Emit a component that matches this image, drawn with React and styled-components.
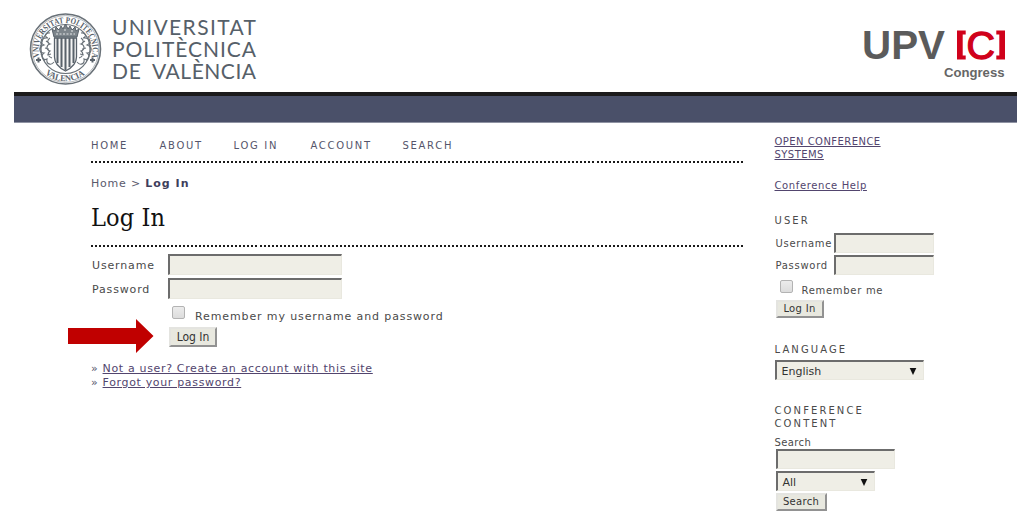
import React from 'react';
import styled, { createGlobalStyle } from 'styled-components';

const Global = createGlobalStyle`
  * { box-sizing: border-box; }
  body {
    margin: 0;
    background: #fff;
    color: #4a4a4a;
    font: 11px/14px "DejaVu Sans", Verdana, sans-serif;
    overflow: hidden;
  }
`;

const Page = styled.div`
  width: 1024px;
  height: 517px;
  overflow: hidden;
`;
const Header = styled.header`
  display: flex;
  justify-content: space-between;
  height: 92px;
  padding: 8px 14px 0 26px;
`;
const Bar = styled.div`
  height: 31px;
  margin: 0 7px 0 14px;
  background: #4a5069;
  border-top: 4px solid #1b1a1b;
  border-bottom: 1px solid #8f93a3;
`;
const Columns = styled.div`
  display: flex;
`;
const Main = styled.main`
  width: 743px;
  padding-top: 14px;
`;
const Dots = styled.div`
  height: 2px;
  margin-left: 91px;
  background: repeating-linear-gradient(90deg, #1a1a1a 0 2px, #fff 2px 4.012px);
`;
const Nav = styled.nav`
  display: flex;
  height: 24px;
  padding-left: 91px;
  font-size: 10px;
  line-height: 17px;
  letter-spacing: 1.7px;
  color: #55556b;
`;
const NavItem = styled.a`
  width: ${(p) => p.$w}px;
  white-space: nowrap;
`;
const Crumbs = styled.div`
  padding: 13px 0 0 91px;
  letter-spacing: 0.8px;
  line-height: 16px;
  color: #5a5a6c;
  b { color: #3e3e5c; letter-spacing: 1px; }
`;
const Title = styled.h1`
  height: 53px;
  margin: 0;
  padding: 9px 0 0 91px;
  font: 400 25px/34px "DejaVu Serif Condensed", "DejaVu Serif", serif;
  letter-spacing: 0.1px;
  color: #111;
`;
const FormRow = styled.div`
  display: flex;
  align-items: center;
  height: 24px;
`;
const Label = styled.label`
  width: ${(p) => p.$w}px;
  padding-top: ${(p) => (p.$small ? 1 : 3)}px;
  letter-spacing: ${(p) => (p.$small ? 0.7 : 0.85)}px;
  font-size: ${(p) => (p.$small ? 10 : 11)}px;
  white-space: nowrap;
`;
const Field = styled.input`
  width: ${(p) => p.$w}px;
  height: ${(p) => p.$h || 21}px;
  padding: 0 4px;
  background: #efeee6;
  border: 2px solid;
  border-color: #6c6c6c #e9e8df #e9e8df #6c6c6c;
  border-right-width: 1px;
  border-bottom-width: 1px;
  border-radius: 0;
  outline: none;
`;
const Check = styled.input`
  appearance: none;
  width: 13px;
  height: 13px;
  margin: 0;
  border: 1px solid #b3b3b3;
  border-radius: 2px;
  background: linear-gradient(#ececec, #dcdcdc);
`;
const Button = styled.button`
  width: ${(p) => p.$w}px;
  height: ${(p) => p.$h}px;
  padding: 0;
  background: #e8e8df;
  border: 2px solid;
  border-color: #e4e4e0 #929292 #929292 #e4e4e0;
  color: #333;
  font: ${(p) => (p.$small ? '10px "DejaVu Sans"' : '12px "DejaVu Sans Condensed", "DejaVu Sans"')}, sans-serif;
  letter-spacing: ${(p) => (p.$small ? 0.3 : 0)}px;
  line-height: 14px;
`;
const MainForm = styled.form`
  padding: 5px 0 0 92px;
`;
const RememberRow = styled.div`
  display: flex;
  height: 27px;
  padding: 6px 0 0 80px;
`;
const RememberText = styled.span`
  padding: 4px 0 0 10px;
  letter-spacing: 0.88px;
`;
const SubmitRow = styled.div`
  display: flex;
  gap: 15px;
  margin-left: -24px;
  height: 27px;
`;
const Arrow = styled.svg`
  margin-top: -8px;
  flex: none;
`;
const Links = styled.div`
  padding: 8px 0 0 91px;
  color: #55556b;
  letter-spacing: 0.66px;
`;
const LinkRow = styled.div`
  height: 14px;
  white-space: nowrap;
`;
const Link = styled.a`
  color: #52456e;
  text-decoration: underline;
`;
const Aside = styled.aside`
  padding: 12px 0 0 31.5px;
  font-size: 10px;
  line-height: 13px;
`;
const SideLink = styled(Link)`
  display: block;
  width: 125px;
  letter-spacing: ${(p) => p.$ls}px;
  margin-bottom: ${(p) => p.$mb}px;
`;
const SideTitle = styled.div`
  width: 110px;
  letter-spacing: 2.1px;
  margin-bottom: ${(p) => p.$mb}px;
`;
const SideForm = styled.form`
  padding-left: 1px;
  margin-bottom: 25px;
`;
const SideRow = styled.div`
  display: flex;
  align-items: center;
  height: 22px;
`;
const SideRemember = styled.div`
  display: flex;
  height: 24px;
  padding: 4px 0 0 4px;
  letter-spacing: 0.7px;
  span { padding: 4px 0 0 9px; }
`;
const Select = styled.div`
  display: flex;
  align-items: center;
  justify-content: space-between;
  width: ${(p) => p.$w}px;
  height: 20px;
  padding: 1px 6px 0 5px;
  background: #efeee6;
  border: 2px solid;
  border-color: #6c6c6c #e9e8df #e9e8df #6c6c6c;
  border-right-width: 1px;
  border-bottom-width: 1px;
  color: #333;
  font-size: 11px;
  margin-bottom: ${(p) => p.$mb}px;
`;
const SearchBox = styled.form`
  padding-left: 1px;
`;
const SearchLabel = styled.label`
  display: block;
  margin: 0 0 0 -1px;
  height: 13px;
  letter-spacing: 0.4px;
`;
const SearchField = styled(Field)`
  display: block;
  margin-bottom: 2px;
`;

function Caret() {
  return (
    <svg width="8" height="7" viewBox="0 0 8 7">
      <path d="M.7 0h6.6L4 7z" fill="#111" />
    </svg>
  );
}

function Floral() {
  return (
    <g fill="none" stroke="#697178" strokeWidth="1.1">
      <path d="M24 25c-5-1-6 4-2 5-7-1-9 5-4 7-6 2-5 8 0 8-4 3-1 8 3 6-1 5 4 7 7 3" />
      <path d="M24 30c-3 2-3 5 0 6-4 1-4 6 0 7-3 2-2 6 2 7M20 33l3 2M19 40l4 1M21 47l4-1" />
      <path d="M17 28c-4 8-4 18 2 25" strokeDasharray="2 1" />
    </g>
  );
}

function UniversityLogo() {
  return (
    <svg width="240" height="82" viewBox="0 0 240 82">
      <defs>
        <path id="sealTop" d="M13.4 49A27 27 0 1 1 65.6 49" />
        <path id="sealBottom" d="M10.5 55A32.2 32.2 0 0 0 68.5 55" />
      </defs>
      <g stroke="#697178" fill="none">
        <circle cx="39.5" cy="41" r="35" strokeWidth="1.6" />
        <circle cx="39.5" cy="41" r="33.4" strokeWidth=".5" />
        <circle cx="39.5" cy="41" r="24.5" strokeWidth="1.2" />
      </g>
      <g fill="#59626b" fontFamily="Liberation Serif, serif" fontWeight="700" fontSize="8.8">
        <text textLength="99" lengthAdjust="spacingAndGlyphs"><textPath href="#sealTop">VNIVERSITAT POLITECNICA</textPath></text>
        <text textLength="43" lengthAdjust="spacingAndGlyphs"><textPath href="#sealBottom" startOffset="14">VALENCIA</textPath></text>
      </g>
      <path d="M12.5 49.5v5M10 52h5M66.5 49.5v5M64 52h5" stroke="#59626b" strokeWidth="2" />
      <Floral />
      <g transform="translate(79 0) scale(-1 1)"><Floral /></g>
      <path d="M28.5 30h22v19c0 7-5 11-11 14-6-3-11-7-11-14z" fill="#f5f5f5" stroke="#59626b" strokeWidth="1.3" />
      <path d="M31.5 30v25M35.5 30v29M39.5 30v32M43.5 30v29M47.5 30v25" stroke="#59626b" strokeWidth="2" />
      <path d="M28 29l-2-8 3 2 1-4 3 3 2-4 2 3 2.5-5 2.5 5 2-3 2 4 3-3 1 4 3-2-2 8z" fill="#7d858b" stroke="#59626b" />
      <path d="M30 26h19M31 23h3M38 22h3M45 23h3" stroke="#e4e6e7" strokeWidth="1" strokeDasharray="2 1.5" />
      <g fill="#566069" fontFamily="Lato, sans-serif" fontSize="21">
        <text x="86" y="26.5" textLength="144">UNIVERSITAT</text>
        <text x="86" y="49" textLength="144">POLITÈCNICA</text>
        <text x="86" y="71" textLength="29">DE</text>
        <text x="126" y="71" textLength="104">VALÈNCIA</text>
      </g>
    </svg>
  );
}

function CongressLogo() {
  return (
    <svg width="150" height="82" viewBox="0 0 150 82" fontFamily="Liberation Sans, Arial, sans-serif">
      <text x="2" y="51.2" fontSize="41" fontWeight="700" fill="#5b5b5b" textLength="83" lengthAdjust="spacingAndGlyphs">UPV</text>
      <text x="106.6" y="50.7" fontSize="38.5" fill="#d0021b" stroke="#d0021b" strokeWidth="1.3" textLength="28.5" lengthAdjust="spacingAndGlyphs">C</text>
      <path d="M105.7 22.5H97v29h8.700v-4h-3v-21h3zM136.300 22.5h8.700v29h-8.700v-4h3v-21h-3z" fill="#d0021b" />
      <text x="84" y="69" fontSize="12.5" fontWeight="700" fill="#666" textLength="60.5" lengthAdjust="spacingAndGlyphs">Congress</text>
    </svg>
  );
}

export default function App() {
  return (
    <Page>
      <Global />
      <Header>
        <UniversityLogo />
        <CongressLogo />
      </Header>
      <Bar />
      <Columns>
        <Main>
          <Nav>
            <NavItem $w={68.5}>HOME</NavItem>
            <NavItem $w={74}>ABOUT</NavItem>
            <NavItem $w={77}>LOG IN</NavItem>
            <NavItem $w={92}>ACCOUNT</NavItem>
            <NavItem $w={60}>SEARCH</NavItem>
          </Nav>
          <Dots />
          <Crumbs>Home &gt; <b>Log In</b></Crumbs>
          <Title>Log In</Title>
          <Dots />
          <MainForm>
            <FormRow>
              <Label $w={76}>Username</Label>
              <Field $w={174} />
            </FormRow>
            <FormRow>
              <Label $w={76}>Password</Label>
              <Field $w={174} />
            </FormRow>
            <RememberRow>
              <Check type="checkbox" />
              <RememberText>Remember my username and password</RememberText>
            </RememberRow>
            <SubmitRow>
              <Arrow width="86" height="34" viewBox="0 0 86 34">
                <path d="M0 9h68V0l17.5 17L68 34v-9H0z" fill="#c00000" />
              </Arrow>
              <Button type="button" $w={48} $h={20}>Log In</Button>
            </SubmitRow>
          </MainForm>
          <Links>
            <LinkRow>» <Link>Not a user? Create an account with this site</Link></LinkRow>
            <LinkRow>» <Link>Forgot your password?</Link></LinkRow>
          </Links>
        </Main>
        <Aside>
          <SideLink $ls={0.45} $mb={18}>OPEN CONFERENCE SYSTEMS</SideLink>
          <SideLink $ls={0.62} $mb={22}>Conference Help</SideLink>
          <SideTitle $mb={5}>USER</SideTitle>
          <SideForm>
            <SideRow><Label $small $w={58.5}>Username</Label><Field $w={100} $h={20} /></SideRow>
            <SideRow><Label $small $w={58.5}>Password</Label><Field $w={100} $h={20} /></SideRow>
            <SideRemember><Check type="checkbox" /><span>Remember me</span></SideRemember>
            <Button type="button" $small $w={48} $h={18}>Log In</Button>
          </SideForm>
          <SideTitle $mb={4}>LANGUAGE</SideTitle>
          <Select $w={149} $mb={24}>English<Caret /></Select>
          <SideTitle $mb={6}>CONFERENCE CONTENT</SideTitle>
          <SearchBox>
            <SearchLabel>Search</SearchLabel>
            <SearchField $w={119} $h={20} />
            <Select $w={99} $mb={2}>All<Caret /></Select>
            <Button type="button" $small $w={51} $h={18}>Search</Button>
          </SearchBox>
        </Aside>
      </Columns>
    </Page>
  );
}
